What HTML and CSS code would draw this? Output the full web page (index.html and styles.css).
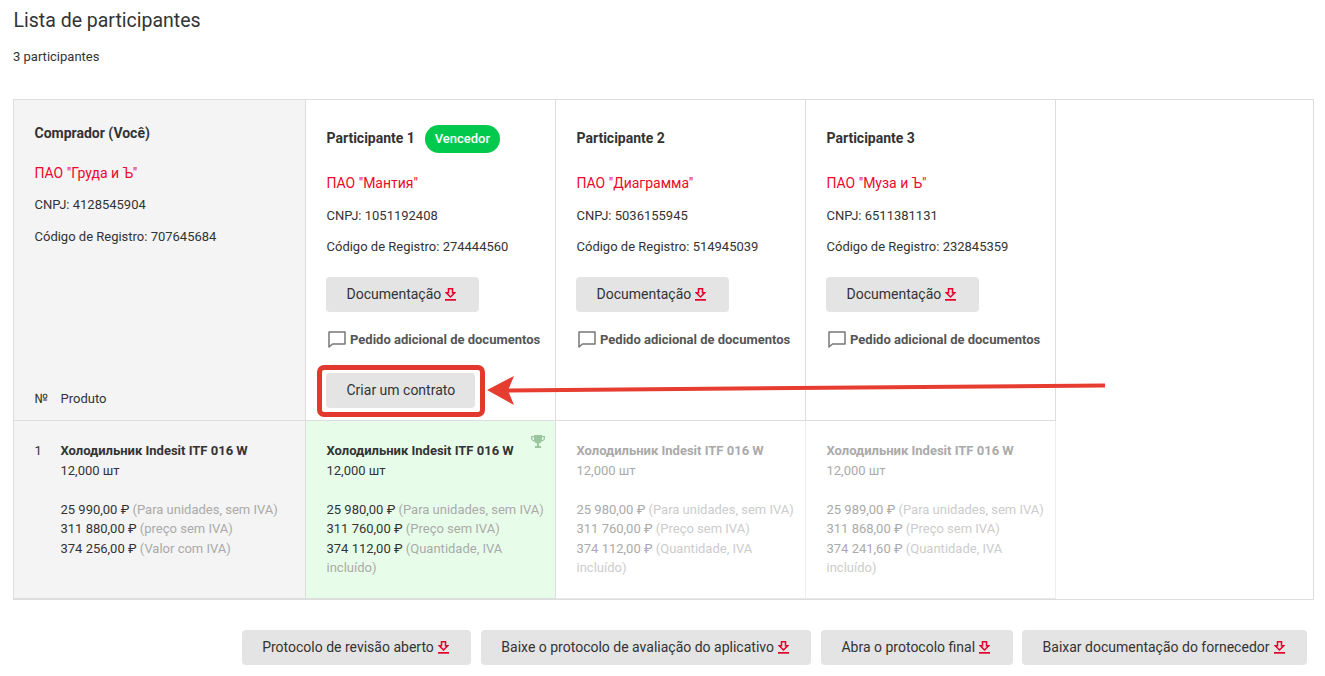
FILE: index.html
```html
<!DOCTYPE html>
<html lang="pt">
<head>
<meta charset="utf-8">
<title>Lista de participantes</title>
<link rel="stylesheet" href="styles.css">
</head>
<body>
<svg width="0" height="0" class="defs">
  <symbol id="dl" viewBox="0 0 11 13">
    <path d="M3.5 .75h4v4h2.300L5.500 9 1.200 4.750h2.300z" fill="none" stroke="currentColor" stroke-width="1.500"/>
    <rect x="0" y="11" width="11" height="1.700" fill="currentColor"/>
  </symbol>
  <symbol id="bubble" viewBox="0 0 18 17">
    <path d="M1 1h16v12H4.500L1 16z" fill="none" stroke="currentColor" stroke-width="1.500" stroke-linejoin="round"/>
  </symbol>
  <symbol id="trophy" viewBox="0 0 14 14">
    <path d="M3 0h8v1h3v2.200c0 1.800-1.400 3-3.400 3.200C10 7.600 9 8.300 8 8.500V11h2v2H4v-2h2V8.500c-1-.2-2-.9-2.600-2.100C1.400 6.200 0 5 0 3.200V1h3zM1.300 2.200v1c0 1 .7 1.700 1.800 1.900-.1-.9-.1-1.900-.1-2.900zM12.700 2.200H11c0 1 0 2-.1 2.900 1.100-.2 1.800-.9 1.800-1.900z" fill="currentColor" fill-rule="evenodd"/>
  </symbol>
</svg>
<main class="page">
  <h1 class="title">Lista de participantes</h1>
  <p class="count">3 participantes</p>
  <section class="board">
    <div class="cell head buyer">
      <div class="buyer-name">Comprador (Você)</div>
      <div class="org">ПАО "Груда и Ъ"</div>
      <div class="buyer-line">CNPJ: 4128545904</div>
      <div class="buyer-line">Código de Registro: 707645684</div>
      <div class="product-head"><span class="num">№</span><span>Produto</span></div>
    </div>
    <div class="cell head part">
      <div class="part-title"><span>Participante 1</span><span class="pill">Vencedor</span></div>
      <div class="org">ПАО "Мантия"</div>
      <div class="line">CNPJ: 1051192408</div>
      <div class="line">Código de Registro: 274444560</div>
      <button class="btn doc">Documentação<svg class="dl"><use href="#dl"/></svg></button>
      <div class="ask"><svg class="bubble"><use href="#bubble"/></svg>Pedido adicional de documentos</div>
      <button class="btn contract">Criar um contrato</button>
    </div>
    <div class="cell head part">
      <div class="part-title"><span>Participante 2</span></div>
      <div class="org">ПАО "Диаграмма"</div>
      <div class="line">CNPJ: 5036155945</div>
      <div class="line">Código de Registro: 514945039</div>
      <button class="btn doc">Documentação<svg class="dl"><use href="#dl"/></svg></button>
      <div class="ask"><svg class="bubble"><use href="#bubble"/></svg>Pedido adicional de documentos</div>
    </div>
    <div class="cell head part">
      <div class="part-title"><span>Participante 3</span></div>
      <div class="org">ПАО "Муза и Ъ"</div>
      <div class="line">CNPJ: 6511381131</div>
      <div class="line">Código de Registro: 232845359</div>
      <button class="btn doc">Documentação<svg class="dl"><use href="#dl"/></svg></button>
      <div class="ask"><svg class="bubble"><use href="#bubble"/></svg>Pedido adicional de documentos</div>
    </div>
    <div class="filler"></div>

    <div class="cell body buyer buyer-row">
      <span class="num">1</span>
      <div>
        <div class="pname">Холодильник Indesit ITF 016 W</div>
        <div class="qty">12,000 шт</div>
        <div>25 990,00 ₽ <span class="note">(Para unidades, sem IVA)</span></div>
        <div>311 880,00 ₽ <span class="note">(preço sem IVA)</span></div>
        <div>374 256,00 ₽ <span class="note">(Valor com IVA)</span></div>
      </div>
    </div>
    <div class="cell body offer win">
      <svg class="trophy"><use href="#trophy"/></svg>
      <div class="pname">Холодильник Indesit ITF 016 W</div>
      <div class="qty">12,000 шт</div>
      <div>25 980,00 ₽ <span class="note">(Para unidades, sem IVA)</span></div>
      <div>311 760,00 ₽ <span class="note">(Preço sem IVA)</span></div>
      <div>374 112,00 ₽ <span class="note">(Quantidade, IVA</span> <span class="note">incluído)</span></div>
    </div>
    <div class="cell body offer lost">
      <div class="pname">Холодильник Indesit ITF 016 W</div>
      <div class="qty">12,000 шт</div>
      <div>25 980,00 ₽ <span class="note">(Para unidades, sem IVA)</span></div>
      <div>311 760,00 ₽ <span class="note">(Preço sem IVA)</span></div>
      <div>374 112,00 ₽ <span class="note">(Quantidade, IVA</span> <span class="note">incluído)</span></div>
    </div>
    <div class="cell body offer lost">
      <div class="pname">Холодильник Indesit ITF 016 W</div>
      <div class="qty">12,000 шт</div>
      <div>25 989,00 ₽ <span class="note">(Para unidades, sem IVA)</span></div>
      <div>311 868,00 ₽ <span class="note">(Preço sem IVA)</span></div>
      <div>374 241,60 ₽ <span class="note">(Quantidade, IVA</span> <span class="note">incluído)</span></div>
    </div>
  </section>
  <footer class="actions">
    <button class="btn">Protocolo de revisão aberto<svg class="dl"><use href="#dl"/></svg></button>
    <button class="btn">Baixe o protocolo de avaliação do aplicativo<svg class="dl"><use href="#dl"/></svg></button>
    <button class="btn">Abra o protocolo final<svg class="dl"><use href="#dl"/></svg></button>
    <button class="btn">Baixar documentação do fornecedor<svg class="dl"><use href="#dl"/></svg></button>
  </footer>
</main>
<div class="callout-box"></div>
<svg class="callout-arrow" width="1325" height="676" viewBox="0 0 1325 676">
  <path d="M1103 385.500 507 390.500" stroke="#e73c30" stroke-width="4" fill="none" stroke-linecap="square"/>
  <path d="M487 390 514 376 508 390.500 514 405z" fill="#e73c30"/>
</svg>
</body>
</html>
```
FILE: styles.css
```css
* { box-sizing: border-box; }
html, body { margin: 0; height: 676px; overflow: hidden; background: #fff; }
body {
  font-family: Roboto, "Noto Sans", sans-serif;
  font-size: 13px;
  line-height: 19.5px;
  color: #333;
  position: relative;
}
.defs { position: absolute; }
.page { padding: 0 18px 0 13px; }
.title {
  margin: 0 0 0 .5px;
  padding-top: 9px;
  font-size: 19.5px;
  font-weight: 400;
  line-height: 24px;
}
.count { margin: 14px 0 0; height: 52px; }

.board {
  display: grid;
  grid-template-columns: 292px repeat(3, 250px) 1fr;
  grid-template-rows: 321px 178px;
  border: 1px solid #ddd;
  height: 501px;
  margin-right: -7px;
}
.cell { border-right: 1px solid #ddd; }
.head { border-bottom: 1px solid #ddd; display: flex; flex-direction: column; align-items: flex-start; }
.body { border-bottom: 2px solid #ddd; height: 179px; }
.filler { grid-column: 5; grid-row: 1 / span 2; }
.buyer { background: #f4f4f4; padding-left: 20.500px; }

.head.buyer { padding-top: 23px; padding-bottom: 11px; }
.buyer-name { font-weight: 700; font-size: 14px; line-height: 20px; }
.buyer .org { margin-top: 21px; }
.buyer-line { margin-top: 11px; }
.buyer-line + .buyer-line { margin-top: 12.500px; }
.product-head { margin-top: auto; display: flex; line-height: 20px; }
.num { width: 26px; flex: none; }

.part { padding: 25px 0 0 20.500px; }
.part-title { display: flex; align-items: center; gap: 10.500px; height: 28px; font-weight: 700; font-size: 14px; }
.pill {
  display: inline-flex;
  align-items: center;
  justify-content: center;
  height: 28px;
  width: 75px;
  border-radius: 14px;
  background: #00c94d;
  color: #fff;
  font-size: 13px;
  font-weight: 500;
  padding-right: 1px;
}
.org { color: #ea0a2a; font-size: 14px; margin-top: 21px; }
.line { margin-top: 12px; }

.btn {
  display: inline-flex;
  align-items: center;
  justify-content: center;
  height: 35px;
  padding: 0 19.500px 1px 20.500px;
  border: 0;
  border-radius: 4px;
  background: #e4e4e4;
  color: #333;
  font-family: inherit;
  font-size: 14px;
  white-space: nowrap;
}
.doc { margin-top: 20.500px; margin-left: -.5px; }
.contract { margin-top: 24px; margin-left: -.5px; }
.dl { width: 11px; height: 13px; margin: 0 3px 0 4px; color: #e4002b; flex: none; }
.ask {
  display: flex;
  align-items: center;
  margin: 17.500px 0 0 1.500px;
  font-weight: 700;
  font-size: 13px;
  color: #555;
  white-space: nowrap;
}
.bubble { width: 18px; height: 17px; margin-right: 4px; color: #777; flex: none; }

.buyer-row { display: flex; padding-top: 20px; }
.pname { font-weight: 700; }
.qty { margin-bottom: 19.500px; }
.note { color: #aaa; }
.offer { padding: 20px 8px 0 20.500px; position: relative; }
.win { background: #e8fde9; }
.trophy { position: absolute; top: 14px; right: 10px; width: 14px; height: 14px; color: #9cc69f; }
.lost { color: #aaa; border-right-color: #eee; border-bottom: 1px solid #e8e8e8; height: 178px; }
.lost .note { color: #ccc; }

.actions { display: flex; justify-content: flex-end; gap: 9.500px; margin-top: 30px; }

.callout-box {
  position: absolute;
  left: 317px;
  top: 365px;
  width: 168px;
  height: 52px;
  border: 5px solid #e2382d;
  border-radius: 7px;
}
.callout-arrow { position: absolute; left: 0; top: 0; pointer-events: none; }
```
